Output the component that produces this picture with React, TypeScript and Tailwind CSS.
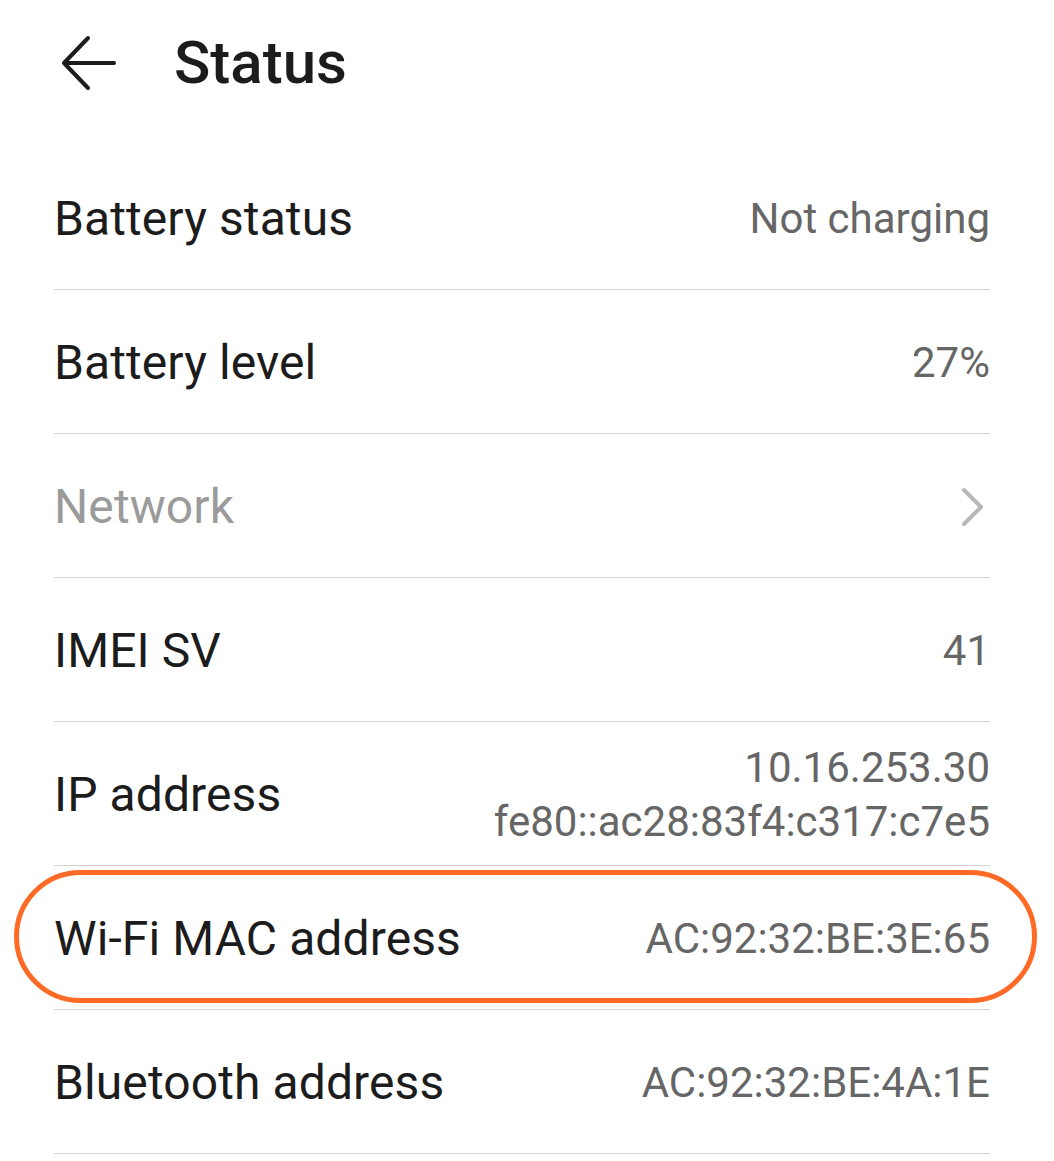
interface StatusRow {
  label: string
  values?: string[]
  disabled?: boolean
  link?: boolean
  highlight?: boolean
}

const rows: StatusRow[] = [
  { label: 'Battery status', values: ['Not charging'] },
  { label: 'Battery level', values: ['27%'] },
  { label: 'Network', disabled: true, link: true },
  { label: 'IMEI SV', values: ['41'] },
  { label: 'IP address', values: ['10.16.253.30', 'fe80::ac28:83f4:c317:c7e5'] },
  { label: 'Wi-Fi MAC address', values: ['AC:92:32:BE:3E:65'], highlight: true },
  { label: 'Bluetooth address', values: ['AC:92:32:BE:4A:1E'] },
]

const Row = ({ row }: { row: StatusRow }) => (
  <div className="relative flex h-[144px] items-center justify-between border-b border-[#d2d2d2] pt-[2px]">
    <span
      className={`text-[48px] leading-none tracking-[0.1px] ${row.disabled ? 'text-[#9b9b9b]' : 'text-[#1c1c1c]'}`}
    >
      {row.label}
    </span>
    {row.values && (
      <div className="flex flex-col items-end text-[42px] leading-[54px] text-[#666666]">
        {row.values.map((v) => (
          <span key={v}>{v}</span>
        ))}
      </div>
    )}
    {row.link && (
      // chevron, drawn to match the thin grey arrow
      <svg className="mr-[6px] h-[40px] w-[24px]" viewBox="0 0 24 40" fill="none">
        <path
          d="M4 3 L21 20 L4 37"
          stroke="#b8b8b8"
          strokeWidth="4"
          strokeLinecap="round"
          strokeLinejoin="round"
        />
      </svg>
    )}
    {row.highlight && (
      <div className="pointer-events-none absolute left-[-40px] top-[4px] h-[133px] w-[1023px] rounded-full border-[5px] border-[#ff6a26]" />
    )}
  </div>
)

export default function App() {
  return (
    <div className="h-[1161px] w-[1054px] overflow-hidden bg-white font-['Roboto',sans-serif]">
      <div className="flex h-[146px] items-center pb-[20px]">
        <svg className="ml-[60px] h-[58px] w-[58px]" viewBox="0 0 58 58" fill="none">
          <path
            d="M4 29 H54 M28 4 L4 29 L28 54"
            stroke="#1c1c1c"
            strokeWidth="4"
            strokeLinecap="round"
            strokeLinejoin="round"
          />
        </svg>
        <h1 className="ml-[56px] text-[60px] font-medium leading-none text-[#1c1c1c]">Status</h1>
      </div>
      <div className="ml-[54px] mr-[64px]">
        {rows.map((row) => (
          <Row key={row.label} row={row} />
        ))}
      </div>
    </div>
  )
}
